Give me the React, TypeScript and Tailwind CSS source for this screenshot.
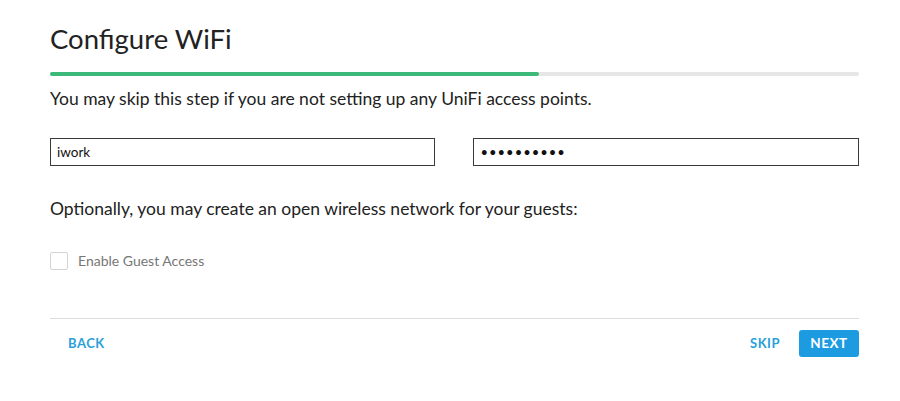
export default function App() {
  return (
    <div
      className="w-[900px] h-[401px] bg-white text-[#222]"
      style={{ fontFamily: 'Lato, "Open Sans", sans-serif' }}
    >
      <div className="ml-[50px] mr-[41px] pt-[21px]">
        {/* Title */}
        <h1 className="text-[27.5px] leading-[36px] font-normal">Configure WiFi</h1>

        {/* Progress */}
        <div className="mt-[15px] h-[4px] w-full bg-[#e6e6e6] rounded-full">
          <div className="h-full w-[60.4%] bg-[#3cb878] rounded-full" />
        </div>

        <p className="mt-[12px] text-[17.5px] leading-[22px]">
          You may skip this step if you are not setting up any UniFi access points.
        </p>

        {/* Inputs */}
        <div className="mt-[28px] flex gap-[38px]">
          <input
            className="flex-1 h-[28px] border-[1.5px] border-[#3a3a3a] px-[6px] text-[13.5px] text-[#111] outline-none"
            defaultValue="iwork"
          />
          <input
            type="password"
            className="flex-1 h-[28px] border-[1.5px] border-[#3a3a3a] px-[7px] text-[13px] text-[#111] outline-none tracking-[1px]"
            defaultValue="password12"
          />
        </div>

        <p className="mt-[32px] text-[17.5px] leading-[22px]">
          Optionally, you may create an open wireless network for your guests:
        </p>

        {/* Guest access */}
        <label className="mt-[30px] flex items-center gap-[10px]">
          <span className="w-[18px] h-[18px] border border-[#d4d4d4] rounded-[2px] bg-white" />
          <span className="text-[14px] text-[#777]">Enable Guest Access</span>
        </label>

        {/* Footer */}
        <div className="mt-[47px] border-t border-[#dcdcdc]" />
        <div className="mt-[11px] flex items-center">
          <button className="ml-[18px] text-[13px] font-bold tracking-[0.5px] text-[#2a9fd8]">
            BACK
          </button>
          <div className="flex-1" />
          <button className="mr-[19px] text-[13px] font-bold tracking-[0.5px] text-[#2a9fd8]">
            SKIP
          </button>
          <button className="w-[60px] h-[27px] rounded-[3px] bg-[#1d9be0] text-white text-[13.5px] font-bold tracking-[0.5px]">
            NEXT
          </button>
        </div>
      </div>
    </div>
  );
}
